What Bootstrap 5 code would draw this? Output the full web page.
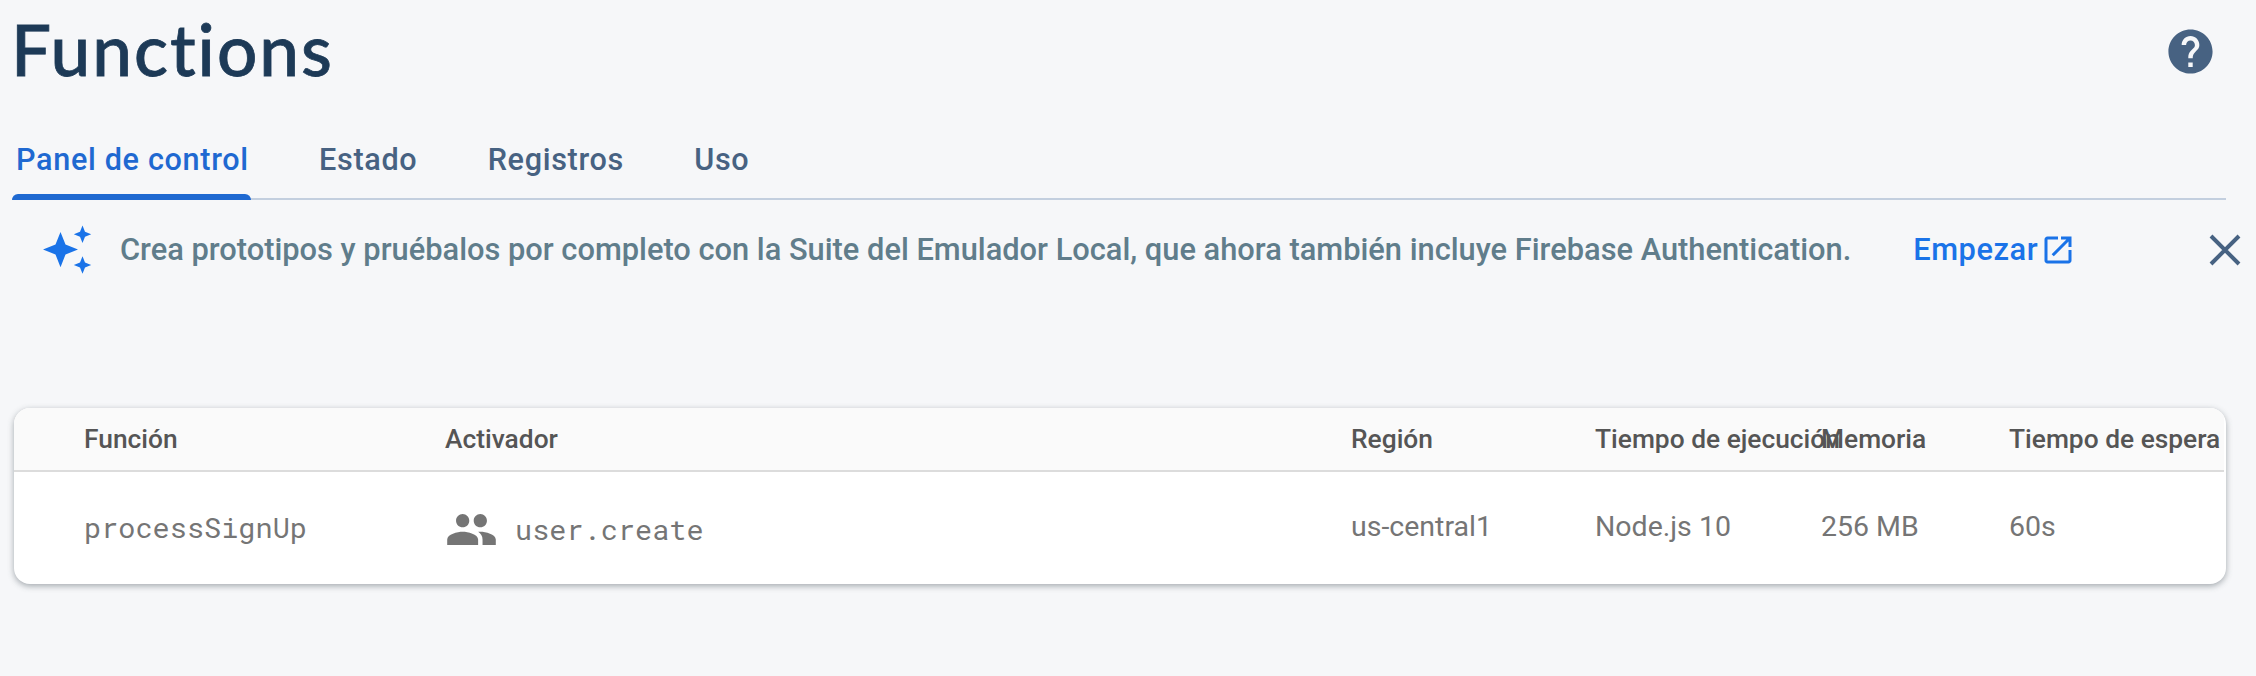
<!DOCTYPE html>
<html lang="es">
<head>
<meta charset="utf-8">
<meta name="viewport" content="width=device-width, initial-scale=1">
<title>Functions</title>
<link href="https://cdn.jsdelivr.net/npm/bootstrap@5.3.0/dist/css/bootstrap.min.css" rel="stylesheet">
<style>
body{background:#f6f7f9;font-family:Roboto,"Liberation Sans",sans-serif;min-height:676px;overflow:hidden}
.page-head{height:120px;padding:0 39px 0 11px}
.page-title{font-family:Lato,sans-serif;font-weight:500;font-size:71px;line-height:98px;letter-spacing:2px;font-variant-ligatures:none;color:#1d3a57;-webkit-text-stroke:.8px #1d3a57}
.help-btn{color:#476282;margin-top:25px}
.tabs-bar{height:80px;margin:0 30px 0 12px;border-bottom:2px solid #c3cfdf;gap:64.300px}
.tabs-bar .nav-link{padding:0 2px 0 4px;line-height:79px;height:80px;font-size:30.600px;font-weight:500;letter-spacing:.670px;color:#476282;white-space:nowrap}
.tabs-bar .nav-link.active{color:#1f69d1;position:relative}
.tabs-bar .nav-link.active::after{content:"";position:absolute;left:0;right:0;bottom:0;height:6px;border-radius:6px 6px 0 0;background:#1f69d1}
.promo{height:100px;padding:0 14px 0 36px;font-size:30.820px;font-weight:500;color:#607d8b;white-space:nowrap}
.promo-text{margin-left:20px}
.promo-link{color:#1a73e8;margin-left:62px;gap:2px;letter-spacing:.550px}
.fn-card{margin:108px 30px 0 14px;height:176px;border:0;border-radius:16px;box-shadow:0 2px 6px rgba(60,70,80,.45);overflow:hidden}
.fn-grid{display:grid;grid-template-columns:361px 906px 244px 226px 188px 1fr;padding-left:70px;white-space:nowrap}
.fn-head{height:64px;line-height:63px;font-size:26.350px;font-weight:500;color:#555;background:#fafafa;border-bottom:2px solid #dcdcdc;margin-right:2px}
.fn-row{height:112px;line-height:109px;font-size:28.500px;color:#757575}
.mono{font-family:"Roboto Mono","DejaVu Sans Mono",monospace}
.fn-name{padding-top:1px;letter-spacing:.050px}
.trigger-icon{margin-top:3px}
.trig{margin-left:17px;padding-top:3px;letter-spacing:.050px}
</style>
</head>
<body>
<header class="page-head d-flex justify-content-between align-items-start">
  <h1 class="page-title m-0">Functions</h1>
  <a class="help-btn d-flex" href="#" aria-label="Ayuda"><svg width="53" height="53" viewBox="0 0 24 24" fill="currentColor"><path d="M12 2C6.480 2 2 6.480 2 12s4.480 10 10 10 10-4.480 10-10S17.520 2 12 2zm1 17h-2v-2h2zm2.070-7.750-.9.920C13.450 12.900 13 13.500 13 15h-2v-.5c0-1.100.450-2.100 1.170-2.830l1.240-1.260c.370-.360.590-.860.590-1.410 0-1.100-.9-2-2-2s-2 .9-2 2H8c0-2.210 1.790-4 4-4s4 1.790 4 4c0 .880-.360 1.680-.930 2.250z"/></svg></a>
</header>
<nav class="tabs-bar nav flex-nowrap">
  <a class="nav-link active" href="#">Panel de control</a>
  <a class="nav-link" href="#">Estado</a>
  <a class="nav-link" href="#">Registros</a>
  <a class="nav-link" href="#">Uso</a>
</nav>
<section class="promo d-flex align-items-center">
  <svg class="flex-shrink-0" width="64" height="64" viewBox="36 218 64 64" fill="#1a73e8"><path d="M60.500 232l5 12.600L78 249.600l-12.500 5-5 12.700-5-12.700-12.500-5 12.500-5z"/><path d="M82.500 225.500l2.500 6.200 6.200 2.500-6.200 2.500-2.500 6.200-2.500-6.200-6.200-2.500 6.200-2.500zM82.500 256.300l2.500 6.200 6.200 2.500-6.200 2.500-2.500 6.200-2.500-6.200-6.200-2.500 6.200-2.500z"/></svg>
  <span class="promo-text">Crea prototipos y pruébalos por completo con la Suite del Emulador Local, que ahora también incluye Firebase Authentication.</span>
  <a class="promo-link d-flex align-items-center text-decoration-none" href="#"><span>Empezar</span><svg width="36" height="36" viewBox="0 0 24 24" fill="currentColor"><path d="M19 19H5V5h7V3H5c-1.110 0-2 .9-2 2v14c0 1.100.890 2 2 2h14c1.100 0 2-.9 2-2v-7h-2v7zM14 3v2h3.590l-9.830 9.830 1.410 1.410L19 6.410V10h2V3h-7z"/></svg></a>
  <svg class="ms-auto" width="34" height="34" viewBox="0 0 34 34" fill="none" stroke="#476282" stroke-width="4"><path d="M3 3l28 28M31 3L3 31"/></svg>
</section>
<main class="fn-card card">
  <div class="fn-grid fn-head"><span>Función</span><span>Activador</span><span>Región</span><span>Tiempo de ejecución</span><span>Memoria</span><span>Tiempo de espera</span></div>
  <div class="fn-grid fn-row"><span class="mono fn-name">processSignUp</span><span class="d-flex align-items-center"><svg class="trigger-icon" width="53" height="53" viewBox="0 0 24 24" fill="currentColor"><path d="M16 11c1.660 0 2.990-1.340 2.990-3S17.660 5 16 5s-3 1.340-3 3 1.340 3 3 3zm-8 0c1.660 0 2.990-1.340 2.990-3S9.660 5 8 5 5 6.340 5 8s1.340 3 3 3zm0 2c-2.330 0-7 1.170-7 3.500V19h14v-2.500C15 14.170 10.330 13 8 13zm8 0c-.290 0-.620.020-.970.050C16.190 13.890 17 15.020 17 16.500V19h6v-2.500c0-2.330-4.670-3.500-7-3.500z"/></svg><span class="mono trig">user.create</span></span><span>us-central1</span><span>Node.js 10</span><span>256 MB</span><span>60s</span></div>
</main>
<script src="https://cdn.jsdelivr.net/npm/bootstrap@5.3.0/dist/js/bootstrap.bundle.min.js"></script>
</body>
</html>
